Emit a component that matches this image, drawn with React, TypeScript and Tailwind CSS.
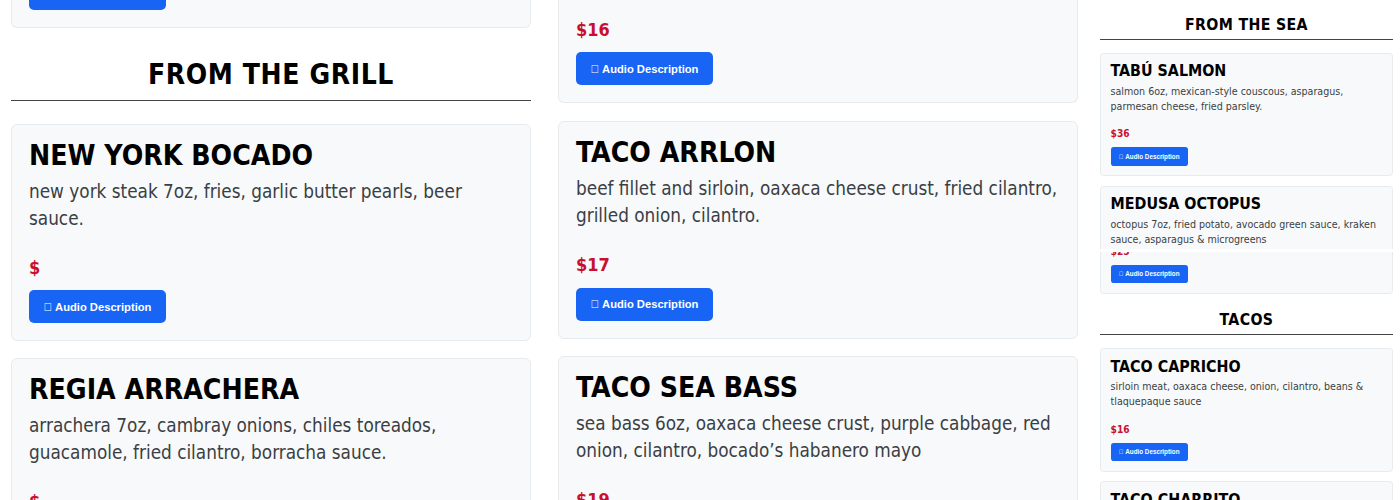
import React from 'react';

type Dish = {
  name: string;
  desc: string;
  price: string;
  glitch?: boolean;
};

const GRILL: Dish[] = [
  {
    name: 'NEW YORK BOCADO',
    desc: 'new york steak 7oz, fries, garlic butter pearls, beer sauce.',
    price: '$',
  },
  {
    name: 'REGIA ARRACHERA',
    desc: 'arrachera 7oz, cambray onions, chiles toreados, guacamole, fried cilantro, borracha sauce.',
    price: '$',
  },
];

const MIDDLE: Dish[] = [
  {
    name: 'TACO ARRLON',
    desc: 'beef fillet and sirloin, oaxaca cheese crust, fried cilantro, grilled onion, cilantro.',
    price: '$17',
  },
  {
    name: 'TACO SEA BASS',
    desc: 'sea bass 6oz, oaxaca cheese crust, purple cabbage, red onion, cilantro, bocado’s habanero mayo',
    price: '$19',
  },
];

const SEA: Dish[] = [
  {
    name: 'TABÚ SALMON',
    desc: 'salmon 6oz, mexican-style couscous, asparagus, parmesan cheese, fried parsley.',
    price: '$36',
  },
  {
    name: 'MEDUSA OCTOPUS',
    desc: 'octopus 7oz, fried potato, avocado green sauce, kraken sauce, asparagus & microgreens',
    price: '$25',
    glitch: true,
  },
];

const TACOS: Dish[] = [
  {
    name: 'TACO CAPRICHO',
    desc: 'sirloin meat, oaxaca cheese, onion, cilantro, beans & tlaquepaque sauce',
    price: '$16',
  },
  {
    name: 'TACO CHARRITO',
    desc: 'ribeye, oaxaca cheese, chorizo, onion, cilantro, salsa roja',
    price: '$16',
  },
];

// icon font is missing on the page, so the glyph shows as a box
const AudioButton = () => (
  <button className="h-[33px] w-[137px] rounded-[5px] bg-[#1764f5] font-['Liberation_Sans',sans-serif] text-[11.2px] font-bold text-white">
    {'\uF028'} Audio Description
  </button>
);

const Price = ({ value }: { value: string }) => (
  <p className="text-[18px] font-bold leading-[26.4px] text-[#c8102e]">{value}</p>
);

const DishCard = ({ dish }: { dish: Dish }) => (
  <div className="mb-[17px] rounded-[6px] border border-[#e8ebee] bg-[#f8f9fa] px-[17px] pt-[17px] pb-[17px]">
    <h3 className="mb-[8px] text-[28.2px] font-bold leading-[28px] text-black">{dish.name}</h3>
    <p className="text-[18.8px] leading-[27px] text-[#3a3f44]">{dish.desc}</p>
    {dish.glitch ? (
      <>
        <div className="h-[4px]" />
        <div className="-mx-[19px] h-[4px] bg-white" />
        <div className="overflow-hidden">
          <div className="-mt-[12px]">
            <Price value={dish.price} />
          </div>
        </div>
      </>
    ) : (
      <div className="mt-[23px]">
        <Price value={dish.price} />
      </div>
    )}
    <div className="mt-[9px]">
      <AudioButton />
    </div>
  </div>
);

const SectionTitle = ({ title }: { title: string }) => (
  <div className="mt-[31px] mb-[23px] border-b border-[#444] pb-[9px] text-center">
    <h2 className="text-[28px] font-bold leading-[32px] tracking-[0.6px] text-black">{title}</h2>
  </div>
);

export default function App() {
  return (
    <div className="flex h-[500px] items-start overflow-hidden bg-white pl-[11px] font-['DejaVu_Sans_Condensed','DejaVu_Sans',sans-serif] font-stretch-condensed">
      {/* left column */}
      <div className="-mt-[23px] w-[520px] shrink-0">
        <div className="mb-[17px] rounded-b-[6px] border border-t-0 border-[#e8ebee] bg-[#f8f9fa] px-[17px] pb-[17px]">
          <AudioButton />
        </div>
        <SectionTitle title="FROM THE GRILL" />
        {GRILL.map((d) => (
          <DishCard key={d.name} dish={d} />
        ))}
      </div>

      {/* middle column */}
      <div className="ml-[27px] w-[520px] shrink-0">
        <div className="mb-[18px] rounded-b-[6px] border border-t-0 border-[#e8ebee] bg-[#f8f9fa] px-[17px] pt-[17px] pb-[17px]">
          <Price value="$16" />
          <div className="mt-[9px]">
            <AudioButton />
          </div>
        </div>
        {MIDDLE.map((d) => (
          <DishCard key={d.name} dish={d} />
        ))}
      </div>

      {/* right column, smaller preview */}
      <div className="ml-[39px] w-[520px] shrink-0 [zoom:0.5635]">
        <div className="-mt-[3px]">
          <SectionTitle title="FROM THE SEA" />
        </div>
        {SEA.map((d) => (
          <DishCard key={d.name} dish={d} />
        ))}
        <SectionTitle title="TACOS" />
        {TACOS.map((d) => (
          <DishCard key={d.name} dish={d} />
        ))}
      </div>
    </div>
  );
}
